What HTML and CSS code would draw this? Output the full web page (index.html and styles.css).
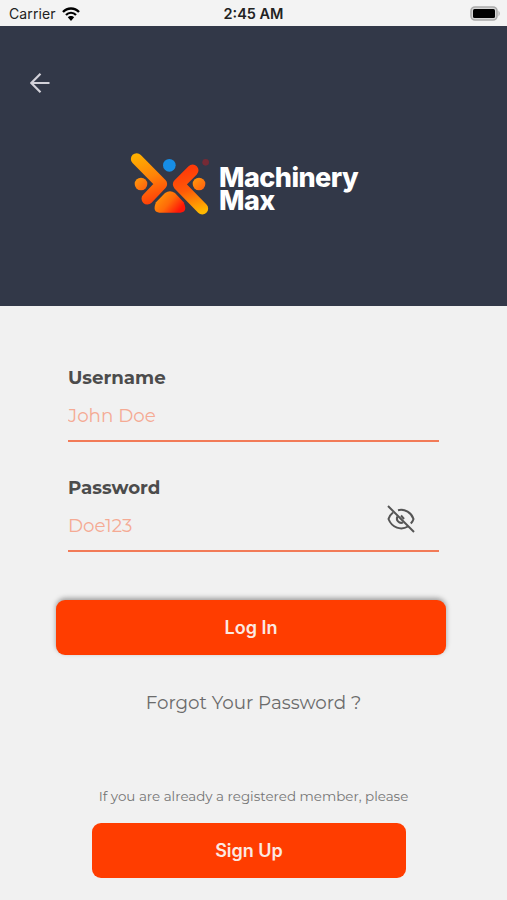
FILE: index.html
```html
<!DOCTYPE html>
<html lang="en">
<head>
    <meta charset="UTF-8">
    <meta name="viewport" content="width=device-width, initial-scale=1.0">
    <title>Machinery Max - Log In</title>
    <link rel="stylesheet" href="styles.css">
</head>
<body>
    <div class="status-bar">
        <div class="carrier">
            <span class="carrier-name">Carrier</span>
            <svg class="wifi" viewBox="0 0 54 42" fill="none" stroke="#000">
                <path d="M3 15 C16 1 38 1 51 15" stroke-width="7"/>
                <path d="M12 24 C20 15 34 15 42 24" stroke-width="6.5"/>
                <path d="M27 42 L17.5 31 C22 26 32 26 36.500 31 Z" fill="#000" stroke="none"/>
            </svg>
        </div>
        <span class="time">2:45 AM</span>
        <svg class="battery" viewBox="0 0 31 15">
            <rect x="1" y="1" width="26" height="13" rx="4" fill="#d5d5d5" stroke="#aaa" stroke-width="1.600"/>
            <rect x="3" y="3" width="22" height="9" rx="1.500" fill="#000"/>
            <path d="M28.500 4.500 Q31 7.500 28.500 10.500 Z" fill="#aaa"/>
        </svg>
    </div>

    <header class="header">
        <a class="back" href="#" aria-label="Back">
            <svg viewBox="0 0 20 20" fill="none" stroke="#d3d2da" stroke-width="2.200">
                <path d="M19.500 10 H1.500 M10.500 0.800 L1.300 10 L10.500 19.200"/>
            </svg>
        </a>
        <div class="logo">
            <svg class="logo-mark" viewBox="30 35 240 190" fill="none">
                <defs>
                    <linearGradient id="left" gradientUnits="userSpaceOnUse" x1="45" y1="45" x2="100" y2="190">
                        <stop offset="0" stop-color="#ffb000"/>
                        <stop offset="0.500" stop-color="#ff8208"/>
                        <stop offset="1" stop-color="#ff3d08"/>
                    </linearGradient>
                    <linearGradient id="right" gradientUnits="userSpaceOnUse" x1="205" y1="85" x2="245" y2="215">
                        <stop offset="0" stop-color="#ff3b08"/>
                        <stop offset="0.450" stop-color="#ff5a08"/>
                        <stop offset="1" stop-color="#ffb800"/>
                    </linearGradient>
                    <linearGradient id="base" x1="0" y1="0.200" x2="1" y2="0.800">
                        <stop offset="0" stop-color="#ff9c08"/>
                        <stop offset="0.500" stop-color="#ff6a08"/>
                        <stop offset="0.900" stop-color="#ff1608"/>
                    </linearGradient>
                    <linearGradient id="dot" x1="0" y1="0" x2="1" y2="1">
                        <stop offset="0" stop-color="#ff9d0a"/>
                        <stop offset="1" stop-color="#ff5a10"/>
                    </linearGradient>
                </defs>
                <path d="M50 56 L124 131 L82 175" stroke="url(#left)" stroke-width="35" stroke-linecap="round" stroke-linejoin="round"/>
                <path d="M218 90 L176 132 L247 205" stroke="url(#right)" stroke-width="35" stroke-linecap="round" stroke-linejoin="round"/>
                <path d="M135 158 Q150 148 165 158 L191 186 Q204 216 181 217 H118 Q96 216 108 186 Z" fill="url(#base)"/>
                <circle cx="63" cy="131" r="19" fill="url(#dot)"/>
                <circle cx="237" cy="131" r="19" fill="url(#dot)"/>
                <circle cx="148" cy="75" r="19" fill="#168de6"/>
                <circle cx="257" cy="66" r="10" fill="#762a35"/>
            </svg>
            <div class="logo-text">Machinery<br>Max</div>
        </div>
    </header>

    <main class="content">
        <form class="form">
            <div class="field">
                <label for="username">Username</label>
                <input id="username" type="text" placeholder="John Doe">
            </div>
            <div class="field">
                <label for="password">Password</label>
                <input id="password" type="text" placeholder="Doe123">
                <svg class="eye" viewBox="0 0 28 28" fill="none" stroke="#555" stroke-width="2">
                    <path d="M11 5.200 C18 3.500 24.500 8 26.500 14 C26 16 25 17.200 23.800 18.500"/>
                    <path d="M6 7.500 C3.500 9.500 2 12 1.500 14 C5 23 14 25.500 21 21.500"/>
                    <path d="M10.500 11.500 C8.500 15 12 19 16 17.500"/>
                    <path d="M14 10.500 L17 14"/>
                    <path d="M1 1 L27 27"/>
                </svg>
            </div>
        </form>

        <button class="btn btn-login">Log In</button>
        <a class="forgot" href="#">Forgot Your Password ?</a>
        <p class="member-note">If you are already a registered member, please</p>
        <button class="btn btn-signup">Sign Up</button>
    </main>
</body>
</html>
```
FILE: styles.css
```css
* {
    box-sizing: border-box;
}
body {
    margin: 0;
    height: 900px;
    overflow: hidden;
    background-color: #f1f1f1;
    font-family: Montserrat, Inter, sans-serif;
    color: #4c4c4c;
}
a {
    text-decoration: none;
}

/* Status bar */
.status-bar {
    display: grid;
    grid-template-columns: 1fr auto 1fr;
    align-items: center;
    height: 26px;
    padding: 1px 6px 0 6px;
    background-color: #f3f3f3;
    font-family: Inter, sans-serif;
    font-size: 14px;
    color: #222;
}
.carrier {
    display: flex;
    align-items: center;
    gap: 6px;
    padding-left: 3px;
    letter-spacing: 0.1px;
}
.wifi {
    width: 18px;
    height: 14px;
}
.time {
    font-size: 14.5px;
    font-weight: 600;
}
.battery {
    width: 31px;
    height: 15px;
    justify-self: end;
}

/* Header */
.header {
    height: 280px;
    padding: 47px 30px 0;
    background-color: #323848;
}
.back {
    display: block;
    width: 20px;
    height: 20px;
}
.back svg {
    display: block;
}
.logo {
    display: flex;
    margin: 59px 0 0 100px;
}
.logo-mark {
    width: 80px;
    height: 63.333px;
}
.logo-text {
    margin: 14px 0 0 9px;
    font-family: Inter, sans-serif;
    font-size: 27px;
    font-weight: 800;
    line-height: 23px;
    letter-spacing: -0.55px;
    color: #fff;
}

/* Form */
.content {
    display: flex;
    flex-direction: column;
    align-items: center;
    padding-top: 60px;
}
.form {
    width: 371px;
}
.field {
    position: relative;
    height: 110px;
}
.field label {
    display: block;
    font-size: 18.2px;
    font-weight: 700;
    line-height: 24px;
}
.field input {
    display: block;
    width: 100%;
    height: 52px;
    padding: 0;
    border: 0;
    border-bottom: 2px solid #f27b58;
    background: transparent;
    font-family: inherit;
    font-size: 18.3px;
    outline: none;
}
.field input::placeholder {
    color: #f5aa94;
    opacity: 1;
}
.eye {
    position: absolute;
    right: 24px;
    top: 29px;
    width: 28px;
    height: 28px;
}

/* Buttons */
.btn {
    height: 55px;
    padding: 0;
    border: 0;
    border-radius: 9px;
    background-color: #ff3d00;
    font-family: Inter, sans-serif;
    font-size: 18px;
    font-weight: 600;
    color: #fbe9e2;
}
.btn-login {
    width: 390px;
    margin: 14px 5px 0 0;
    box-shadow: 0 -2px 5px rgba(0, 0, 0, 0.35);
}
.forgot {
    margin-top: 36px;
    font-size: 18.3px;
    line-height: 24px;
    color: #6b6b6b;
}
.member-note {
    margin: 71px 0 0;
    font-size: 13.45px;
    line-height: 20px;
    color: #757575;
}
.btn-signup {
    width: 314px;
    margin: 17px 9px 0 0;
}
```
